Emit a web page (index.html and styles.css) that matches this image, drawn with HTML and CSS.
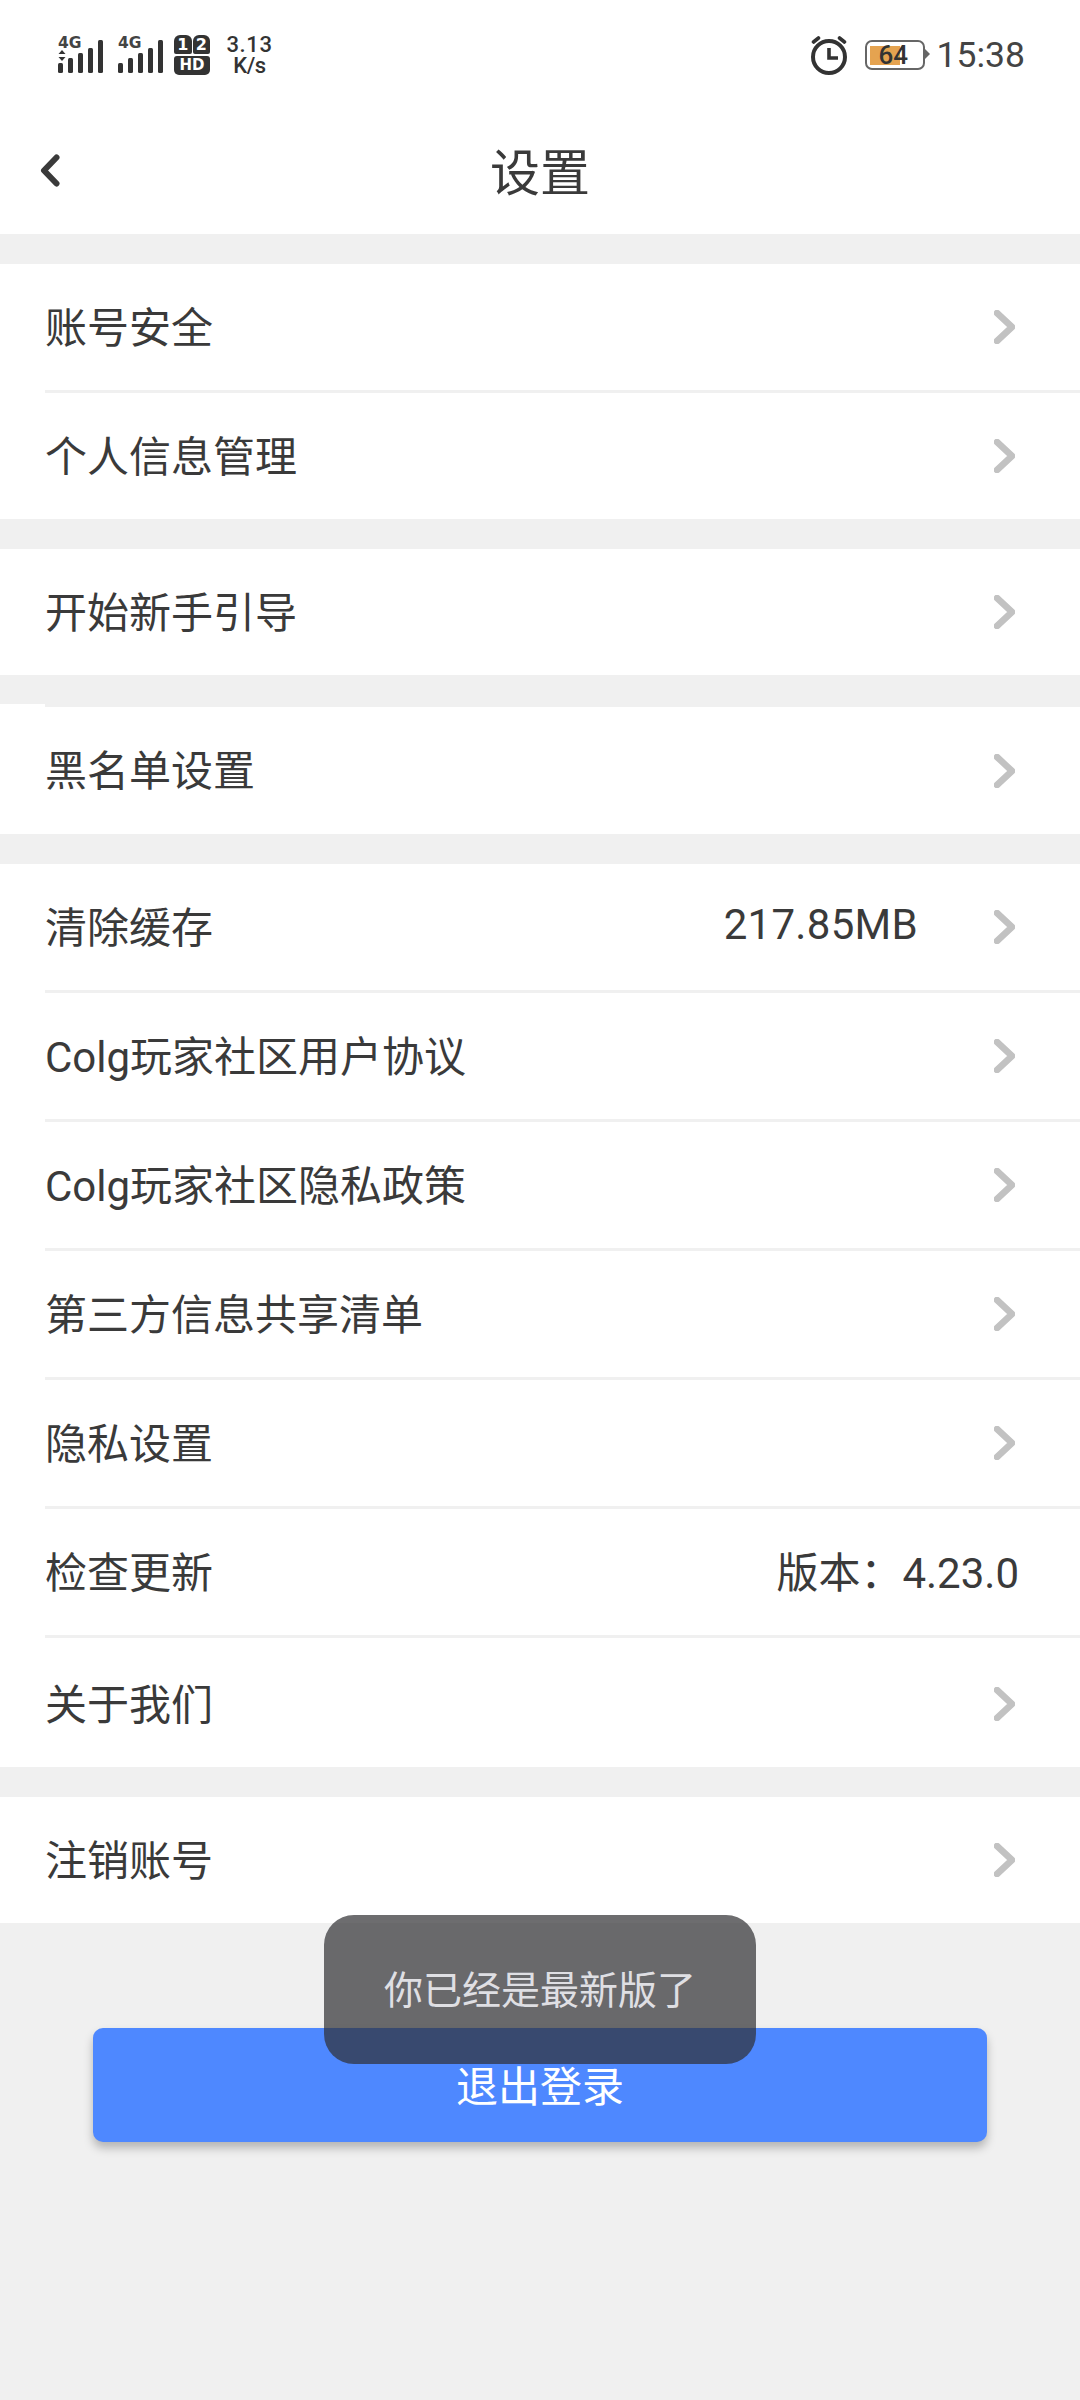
FILE: index.html
```html
<!DOCTYPE html>
<html lang="zh-CN">
<head>
  <meta charset="UTF-8" />
  <meta name="viewport" content="width=device-width, initial-scale=1.0"/>
  <title>设置</title>
  <link rel="stylesheet" href="styles.css">
</head>
<body>
  <!-- status bar -->
  <div class="statusbar">
    <div class="status-left">
      <div class="sim">
        <span class="sim-tag">4G</span>
        <svg class="updown" width="8" height="11" viewBox="0 0 8 11"><path d="M4 0l3.5 4h-7zM4 11L.5 7h7z" fill="#333"/></svg>
        <svg class="bars" width="45" height="33" viewBox="0 0 45 33"><g fill="#333"><rect x="0" y="23" width="5" height="10" rx="1.5"/><rect x="10" y="18" width="5" height="15" rx="1.5"/><rect x="20" y="13" width="5" height="20" rx="1.5"/><rect x="30" y="8" width="5" height="25" rx="1.5"/><rect x="40" y="0" width="5" height="33" rx="1.5"/></g></svg>
      </div>
      <div class="sim sim-second">
        <span class="sim-tag">4G</span>
        <svg class="bars" width="45" height="33" viewBox="0 0 45 33"><g fill="#333"><rect x="0" y="23" width="5" height="10" rx="1.5"/><rect x="10" y="18" width="5" height="15" rx="1.5"/><rect x="20" y="13" width="5" height="20" rx="1.5"/><rect x="30" y="8" width="5" height="25" rx="1.5"/><rect x="40" y="0" width="5" height="33" rx="1.5"/></g></svg>
      </div>
      <div class="hd-badge">
        <div class="hd-top"><span>1</span><span>2</span></div>
        <div class="hd-bottom">HD</div>
      </div>
      <div class="netspeed">
        <span class="netspeed-num">3.13</span>
        <span class="netspeed-unit">K/s</span>
      </div>
    </div>
    <div class="status-right">
      <svg class="alarm" width="38" height="39" viewBox="0 0 38 39" fill="none" stroke="#333">
        <circle cx="19" cy="21" r="16" stroke-width="4"/>
        <path d="M19 12v10h9" stroke-width="3.6"/>
        <path d="M3.500 6l5-4M34.500 6l-5-4" stroke-width="3.6" stroke-linecap="round"/>
      </svg>
      <div class="battery">
        <div class="battery-fill"></div>
        <span class="battery-num">64</span>
      </div>
      <span class="clock">15:38</span>
    </div>
  </div>

  <!-- title bar -->
  <div class="navbar">
    <svg class="back" width="20" height="33" viewBox="0 0 20 33" fill="none"><path d="M16.500 3.500L4 16.500l12.500 13" stroke="#3a3a3a" stroke-width="6" stroke-linecap="round" stroke-linejoin="round"/></svg>
    <h1>设置</h1>
  </div>

  <div class="group">
    <div class="row"><span class="label">账号安全</span><svg class="arrow" width="21" height="34" viewBox="0 0 21 34"><path d="M3 3l15 14L3 31"/></svg></div>
    <div class="row"><span class="label">个人信息管理</span><svg class="arrow" width="21" height="34" viewBox="0 0 21 34"><path d="M3 3l15 14L3 31"/></svg></div>
  </div>

  <div class="group">
    <div class="row"><span class="label">开始新手引导</span><svg class="arrow" width="21" height="34" viewBox="0 0 21 34"><path d="M3 3l15 14L3 31"/></svg></div>
  </div>

  <div class="group group-lined">
    <div class="row"><span class="label">黑名单设置</span><svg class="arrow" width="21" height="34" viewBox="0 0 21 34"><path d="M3 3l15 14L3 31"/></svg></div>
  </div>

  <div class="group">
    <div class="row"><span class="label">清除缓存</span><span class="value value-cache">217.85MB</span><svg class="arrow" width="21" height="34" viewBox="0 0 21 34"><path d="M3 3l15 14L3 31"/></svg></div>
    <div class="row"><span class="label">Colg玩家社区用户协议</span><svg class="arrow" width="21" height="34" viewBox="0 0 21 34"><path d="M3 3l15 14L3 31"/></svg></div>
    <div class="row"><span class="label">Colg玩家社区隐私政策</span><svg class="arrow" width="21" height="34" viewBox="0 0 21 34"><path d="M3 3l15 14L3 31"/></svg></div>
    <div class="row"><span class="label">第三方信息共享清单</span><svg class="arrow" width="21" height="34" viewBox="0 0 21 34"><path d="M3 3l15 14L3 31"/></svg></div>
    <div class="row"><span class="label">隐私设置</span><svg class="arrow" width="21" height="34" viewBox="0 0 21 34"><path d="M3 3l15 14L3 31"/></svg></div>
    <div class="row"><span class="label">检查更新</span><span class="value">版本：4.23.0</span></div>
    <div class="row row-last"><span class="label">关于我们</span><svg class="arrow" width="21" height="34" viewBox="0 0 21 34"><path d="M3 3l15 14L3 31"/></svg></div>
  </div>

  <div class="group">
    <div class="row"><span class="label">注销账号</span><svg class="arrow" width="21" height="34" viewBox="0 0 21 34"><path d="M3 3l15 14L3 31"/></svg></div>
  </div>

  <button class="logout">退出登录</button>

  <!-- toast over the logout button -->
  <div class="toast">你已经是最新版了</div>
</body>
</html>
```

FILE: styles.css
```css
:root {
  --bg: #f0f0f0;
  --text: #3a3a3a;
  --blue: #4e88ff;
}

body {
  margin: 0;
  height: 2400px;
  background: var(--bg);
  color: var(--text);
  font-family: Roboto, "Noto Sans CJK SC", sans-serif;
  overflow: hidden;
  position: relative;
}

/* Status bar */
.statusbar {
  height: 110px;
  box-sizing: border-box;
  padding: 0 55px 0 58px;
  background: #fff;
  display: flex;
  align-items: center;
  justify-content: space-between;
}

.status-left {
  display: flex;
  align-items: center;
}

.sim {
  position: relative;
  width: 45px;
  height: 36px;
}

.sim-second {
  margin-left: 15px;
}

.sim-tag {
  position: absolute;
  top: 0;
  left: 0;
  font-family: "DejaVu Sans", sans-serif;
  font-size: 15.5px;
  line-height: 12px;
  font-weight: 700;
  color: #444;
}

.updown {
  position: absolute;
  left: 0;
  top: 13px;
}

.bars {
  position: absolute;
  left: 0;
  bottom: 0;
}

.hd-badge {
  margin-left: 11px;
  width: 36px;
  height: 40px;
  display: flex;
  flex-direction: column;
  justify-content: space-between;
}

.hd-top {
  display: flex;
  justify-content: space-between;
}

.hd-top span {
  width: 17.5px;
  height: 19px;
  border-radius: 6px 6px 2px 2px;
  background: #333;
  color: #fff;
  font-family: "DejaVu Sans", sans-serif;
  font-size: 16px;
  line-height: 19px;
  font-weight: 700;
  text-align: center;
}

.hd-bottom {
  height: 19px;
  border-radius: 3px 3px 5px 5px;
  background: #333;
  color: #fff;
  font-family: "DejaVu Sans", sans-serif;
  font-size: 15px;
  line-height: 19px;
  font-weight: 700;
  text-align: center;
}

.netspeed {
  margin-left: 16px;
  width: 47px;
  height: 42px;
  display: flex;
  flex-direction: column;
  align-items: center;
  font-size: 22px;
  line-height: 21px;
  font-weight: 500;
  color: #333;
}

.netspeed-num {
  letter-spacing: 0.6px;
}

.netspeed-unit {
  letter-spacing: -0.5px;
}

.status-right {
  display: flex;
  align-items: center;
}

.battery {
  position: relative;
  margin: 0 12px 0 17px;
  width: 60px;
  height: 30px;
  box-sizing: border-box;
  border: 2.5px solid #666;
  border-radius: 7px;
}

.battery::after {
  content: "";
  position: absolute;
  right: -7.5px;
  top: 7px;
  border-left: 5px solid #666;
  border-top: 5.500px solid transparent;
  border-bottom: 5.500px solid transparent;
}

.battery-fill {
  position: absolute;
  left: 3.5px;
  top: 3.5px;
  bottom: 3.5px;
  width: 30px;
  background: #e5a350;
}

.battery-num {
  position: absolute;
  left: 12px;
  top: -2.5px;
  font-size: 26px;
  line-height: 30px;
  font-weight: 500;
  color: #333;
}

.clock {
  font-size: 35.5px;
  line-height: 40px;
  color: #444;
}

/* Title bar */
.navbar {
  height: 124px;
  box-sizing: border-box;
  padding-bottom: 6px;
  background: #fff;
  display: flex;
  align-items: center;
  justify-content: center;
  position: relative;
}

.navbar h1 {
  margin: 0;
  font-size: 50px;
  font-weight: 400;
  color: var(--text);
}

.back {
  position: absolute;
  left: 40px;
  top: 44px;
}

/* Settings list */
.group {
  margin-top: 30px;
  background: #fff;
}

/* this group carries its own line on top, so it starts a little higher */
.group-lined {
  margin-top: 29px;
}

.group-lined .row {
  height: 127px;
  border-top: 3px solid var(--bg);
}

/* rows sit 45px in, the white of the group shows left of the dividers */
.row {
  height: 126px;
  margin-left: 45px;
  padding-right: 65px;
  display: flex;
  align-items: center;
  border-bottom: 3px solid var(--bg);
}

.row:last-child {
  border-bottom: 0;
}

.row-last {
  padding-top: 3px;
}

.label {
  flex: 1;
  font-size: 42px;
  padding-bottom: 6px;
  color: var(--text);
}

.value {
  font-size: 42px;
  padding-bottom: 6px;
  color: var(--text);
  margin-right: -4px;
}

.value-cache {
  letter-spacing: 0.3px;
  margin-right: 76px;
}

.arrow {
  fill: none;
  stroke: #c2c2c2;
  stroke-width: 6.5px;
  stroke-linecap: round;
  stroke-linejoin: round;
}

/* Logout */
.logout {
  display: block;
  margin: 105px auto 0;
  width: 894px;
  height: 114px;
  padding: 0 0 4px;
  border: none;
  border-radius: 10px;
  background: var(--blue);
  color: #fff;
  font-family: inherit;
  font-size: 42px;
  box-shadow: 0 6px 10px rgba(0, 0, 0, 0.25);
}

.toast {
  position: absolute;
  left: 324px;
  top: 1915px;
  width: 432px;
  height: 149px;
  box-sizing: border-box;
  padding-top: 51px;
  border-radius: 30px;
  background: rgba(47, 47, 50, 0.7);
  color: #dfdfe3;
  font-size: 39px;
  line-height: 50px;
  text-align: center;
}
```
